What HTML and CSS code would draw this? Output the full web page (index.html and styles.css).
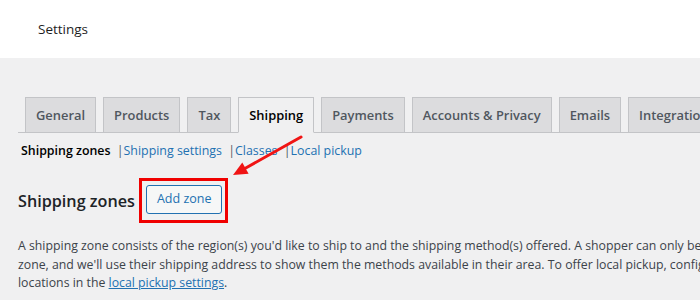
FILE: index.html
```html
<!DOCTYPE html>
<html>
<head>
  <meta charset="UTF-8">
  <title>Settings</title>
  <link rel="stylesheet" href="styles.css">
</head>
<body>

<div class="admin-header">
  <h1 class="header-title">Settings</h1>
</div>

<div class="wrap">
  <nav class="nav-tab-wrapper">
    <a class="nav-tab" href="#">General</a>
    <a class="nav-tab" href="#">Products</a>
    <a class="nav-tab" href="#">Tax</a>
    <a class="nav-tab nav-tab-active" href="#">Shipping</a>
    <a class="nav-tab" href="#">Payments</a>
    <a class="nav-tab" href="#">Accounts &amp; Privacy</a>
    <a class="nav-tab" href="#">Emails</a>
    <a class="nav-tab" href="#">Integration</a>
    <a class="nav-tab" href="#">Advanced</a>
  </nav>

  <ul class="subsubsub">
    <li><span class="current">Shipping zones</span> |</li>
    <li><a href="#">Shipping settings</a> |</li>
    <li><a href="#">Classes</a> |</li>
    <li><a href="#">Local pickup</a></li>
  </ul>

  <h2 class="zones-title">
    Shipping zones
    <span class="highlight"><a class="page-title-action" href="#">Add zone</a></span>
  </h2>

  <p class="zones-desc">A shipping zone consists of the region(s) you'd like to ship to and the shipping method(s) offered. A shopper can only be matched to one<br>zone, and we'll use their shipping address to show them the methods available in their area. To offer local pickup, configure your pickup<br>locations in the <a href="#">local pickup settings</a>.</p>
</div>

<!-- annotation arrow pointing at the button -->
<svg class="arrow" width="700" height="300" viewBox="0 0 700 300">
  <line x1="301" y1="137" x2="244" y2="169" stroke="#f01414" stroke-width="3" stroke-linecap="round"/>
  <polygon points="233,175 242.3,162.5 248.6,173.7" fill="#f01414"/>
</svg>

</body>
</html>
```

FILE: styles.css
```css
html, body {
	margin: 0;
	height: 300px;
	overflow: hidden;
}

body {
	position: relative;
	background-color: #f0f0f1;
	font-family: "Open Sans", "Noto Sans", sans-serif;
	font-size: 12.3px;
	color: #3c434a;
}

a {
	color: #2271b1;
}

/* White bar at the top */
.admin-header {
	height: 58px;
	background-color: #fff;
	display: flex;
	align-items: center;
	padding-left: 38px;
}

.header-title {
	margin: 0 0 1px;
	font-size: 13.5px;
	font-weight: 400;
	color: #1e1e1e;
}

.wrap {
	padding-left: 18px;
}

/* Tabs */
.nav-tab-wrapper {
	display: flex;
	margin-top: 39px;
	border-bottom: 1px solid #c3c4c7;
	white-space: nowrap;
	width: 900px;
}

.nav-tab {
	margin-left: 7px;
	padding: 5px 10px;
	border: 1px solid #c3c4c7;
	border-bottom: none;
	background-color: #dcdcde;
	color: #50575e;
	font-size: 12.9px;
	line-height: 24px;
	font-weight: 600;
	text-decoration: none;
}

.nav-tab-active {
	background-color: #f0f0f1;
	color: #000;
	border-bottom: 1px solid #f0f0f1;
	margin-bottom: -1px;
}

/* Sub navigation */
.subsubsub {
	list-style: none;
	margin: 5px 0 0;
	padding: 0 0 0 3px;
	display: flex;
	line-height: 26px;
	color: #50575e;
	font-size: 12.4px;
}

.subsubsub a {
	margin-right: 3px;
	text-decoration: none;
}

.subsubsub .current {
	font-weight: 600;
	color: #000;
	margin-right: 3px;
}

/* Heading with the button */
.zones-title {
	display: flex;
	align-items: center;
	margin: 14px 0 0;
	font-size: 16.2px;
	font-weight: 600;
	color: #1d2327;
}

.highlight {
	display: inline-flex;
	margin-left: 4px;
	padding: 4px 3px 6px 4px;
	border: 3px solid #f00000;
}

.page-title-action {
	display: inline-block;
	height: 27px;
	line-height: 26px;
	padding: 0 10px;
	border: 1px solid #2271b1;
	border-radius: 3px;
	background-color: #f6f7f7;
	font-size: 12.5px;
	font-weight: 400;
	text-decoration: none;
}

.zones-desc {
	margin: 14px 0 0;
	line-height: 18.5px;
	white-space: nowrap;
}

.arrow {
	position: absolute;
	top: 0;
	left: 0;
	pointer-events: none;
}
```
